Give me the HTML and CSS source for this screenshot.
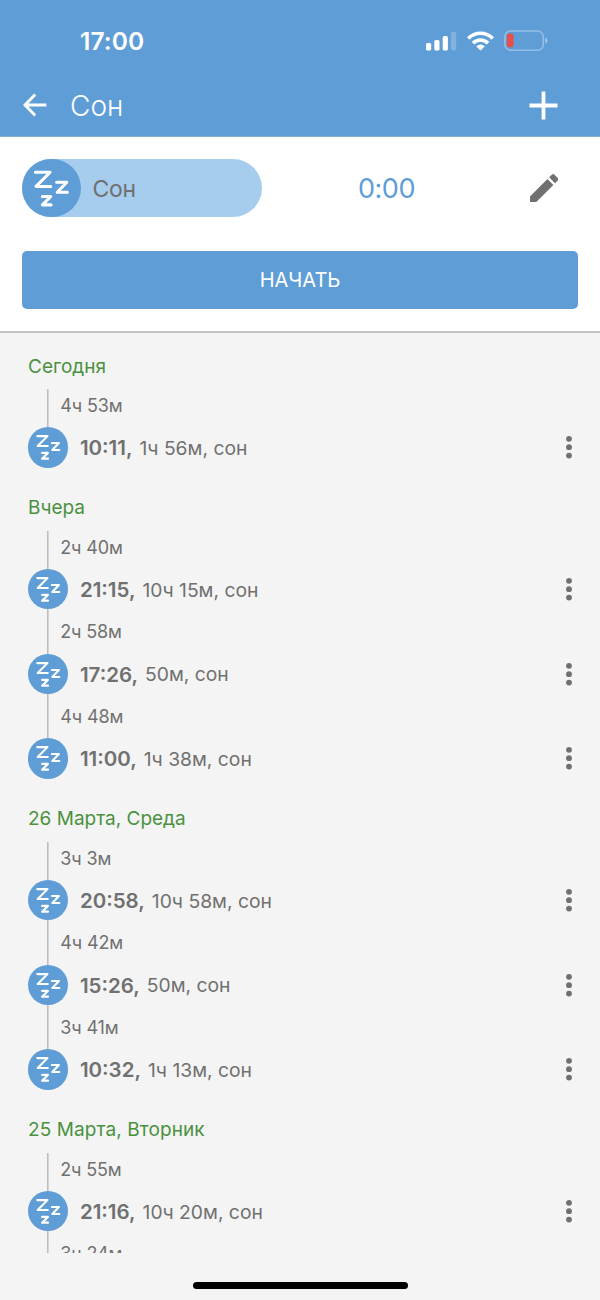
FILE: index.html
```html
<!DOCTYPE html>
<html lang="ru">
<head>
<meta charset="utf-8">
<title>Сон</title>
<link rel="stylesheet" href="styles.css">
</head>
<body>
<svg class="defs" aria-hidden="true">
  <symbol id="zzz" viewBox="0 0 58.5 58.5">
    <g fill="none" stroke="#fff" stroke-linecap="round" stroke-linejoin="round">
      <path stroke-width="3" d="M13.4 13.2H28.2L14 27.4H28.7"/>
      <path stroke-width="3" d="M34.6 23.2H44.8L35.2 33.3H45.4"/>
      <path stroke-width="3.1" d="M20.4 37.5H28.8L20.4 45.9H29"/>
    </g>
  </symbol>
  <symbol id="more" viewBox="0 0 8 24">
    <g fill="#707070"><circle cx="4" cy="3.8" r="2.9"/><circle cx="4" cy="12.2" r="2.9"/><circle cx="4" cy="20.6" r="2.9"/></g>
  </symbol>
</svg>
<div class="app">
  <header class="top">
    <div class="status">
      <span class="clock">17:00</span>
      <svg class="signal" width="31" height="20" viewBox="0 0 31 20" fill="#fff">
        <rect x="0" y="12" width="5.2" height="7.6" rx="1.6"/>
        <rect x="8.3" y="9" width="5.2" height="10.6" rx="1.6"/>
        <rect x="16.7" y="5" width="5.2" height="14.6" rx="1.6"/>
        <rect x="25" y="0.7" width="5.2" height="18.9" rx="1.6" opacity=".22"/>
      </svg>
      <svg class="wifi" width="27" height="20" viewBox="0 0 27 20" fill="none" stroke="#fff" stroke-width="3.6">
        <path d="M1.3 7.4C8 .6 19 .6 25.7 7.4"/>
        <path d="M6 12.1C10.2 8 16.8 8 21 12.1"/>
        <path fill="#fff" stroke="none" d="M9.2 15.3Q13.5 11.7 17.8 15.3L14.2 18.9Q13.5 19.5 12.8 18.9Z"/>
      </svg>
      <svg class="battery" width="44" height="22" viewBox="0 0 44 22">
        <rect x=".9" y="1" width="38.4" height="19.2" rx="5.8" fill="none" stroke="#fff" stroke-opacity=".34" stroke-width="1.6"/>
        <path d="M41.2 7.6Q43.5 8.3 43.5 10.6T41.2 13.6Z" fill="#fff" fill-opacity=".4"/>
        <rect x="3" y="3.6" width="6.6" height="13.6" rx="2.8" fill="#eb4d47"/>
      </svg>
    </div>
    <div class="bar">
      <svg class="back" width="24" height="24" viewBox="0 0 24 24" fill="none" stroke="#fff" stroke-width="2.9"><path d="M23.4 12H2.5M12.2 1.4L2 12L12.2 22.6"/></svg>
      <h1 class="title">Сон</h1>
      <svg class="add" width="29" height="29" viewBox="0 0 29 29" stroke="#fff" stroke-width="3.8"><path d="M14.5 .5V28.5M.5 14.5H28.5"/></svg>
    </div>
  </header>

  <section class="panel">
    <div class="timer">
      <div class="pill"><span class="badge big"><svg><use href="#zzz"/></svg></span><span class="pill-text">Сон</span></div>
      <span class="elapsed">0:00</span>
      <svg class="edit" width="28.4" height="28.4" viewBox="3 3 18 18" fill="#707070"><path d="M3 17.25V21h3.75L17.81 9.94l-3.75-3.75L3 17.25zM20.71 7.04c.39-.39.39-1.02 0-1.41l-2.34-2.34c-.39-.39-1.02-.39-1.41 0l-1.83 1.83 3.75 3.75 1.83-1.83z"/></svg>
    </div>
    <button class="start">НАЧАТЬ</button>
  </section>

  <main class="list">
    <section class="group">
      <h2 class="day">Сегодня</h2>
      <div class="item"><p class="gap">4ч 53м</p><div class="entry"><span class="badge"><svg><use href="#zzz"/></svg></span><b class="time">10:11,</b><span class="info">1ч 56м, сон</span><svg class="more"><use href="#more"/></svg></div></div>
    </section>
    <section class="group">
      <h2 class="day">Вчера</h2>
      <div class="item"><p class="gap">2ч 40м</p><div class="entry"><span class="badge"><svg><use href="#zzz"/></svg></span><b class="time">21:15,</b><span class="info">10ч 15м, сон</span><svg class="more"><use href="#more"/></svg></div></div>
      <div class="item"><p class="gap">2ч 58м</p><div class="entry"><span class="badge"><svg><use href="#zzz"/></svg></span><b class="time">17:26,</b><span class="info">50м, сон</span><svg class="more"><use href="#more"/></svg></div></div>
      <div class="item"><p class="gap">4ч 48м</p><div class="entry"><span class="badge"><svg><use href="#zzz"/></svg></span><b class="time">11:00,</b><span class="info">1ч 38м, сон</span><svg class="more"><use href="#more"/></svg></div></div>
    </section>
    <section class="group">
      <h2 class="day">26 Марта, Среда</h2>
      <div class="item"><p class="gap">3ч 3м</p><div class="entry"><span class="badge"><svg><use href="#zzz"/></svg></span><b class="time">20:58,</b><span class="info">10ч 58м, сон</span><svg class="more"><use href="#more"/></svg></div></div>
      <div class="item"><p class="gap">4ч 42м</p><div class="entry"><span class="badge"><svg><use href="#zzz"/></svg></span><b class="time">15:26,</b><span class="info">50м, сон</span><svg class="more"><use href="#more"/></svg></div></div>
      <div class="item"><p class="gap">3ч 41м</p><div class="entry"><span class="badge"><svg><use href="#zzz"/></svg></span><b class="time">10:32,</b><span class="info">1ч 13м, сон</span><svg class="more"><use href="#more"/></svg></div></div>
    </section>
    <section class="group">
      <h2 class="day wide">25 Марта, Вторник</h2>
      <div class="item"><p class="gap">2ч 55м</p><div class="entry"><span class="badge"><svg><use href="#zzz"/></svg></span><b class="time">21:16,</b><span class="info">10ч 20м, сон</span><svg class="more"><use href="#more"/></svg></div></div>
      <div class="item"><p class="gap">3ч 24м</p></div>
    </section>
  </main>
  <footer class="home"><span class="home-bar"></span></footer>
</div>
</body>
</html>
```
FILE: styles.css
```css
* { box-sizing: border-box; margin: 0; padding: 0; }
body { font-family: Inter, "Noto Sans", sans-serif; background: #f4f4f4; color: #707070; }
svg { display: block; flex: none; }
.defs { width: 0; height: 0; position: absolute; }
.app { width: 600px; height: 1300px; display: flex; flex-direction: column; overflow: hidden; }

.top { height: 137px; flex: none; background: #5f9dd7; border-bottom: 1px solid #85afd6; color: #fff; }
.status { height: 74px; padding: 8px 52px 0 80px; display: flex; align-items: center; }
.clock { font-size: 24.5px; font-weight: 600; letter-spacing: 0.1px; flex: 1; }
.wifi { margin-left: 10px; }
.battery { margin-left: 10px; }
.bar { height: 62px; padding: 0 42px 0 23px; display: flex; align-items: center; }
.title { font-size: 28px; font-weight: 300; margin-left: 23px; padding-top: 2px; flex: 1; }

.panel { height: 196px; flex: none; background: #fff; border-bottom: 2px solid #c4c4c4; padding: 21.5px 22px 0; }
.timer { height: 58.5px; display: flex; align-items: center; }
.pill { width: 240px; height: 58.5px; border-radius: 30px; background: #a6ccee; display: flex; align-items: center; }
.pill-text { font-size: 23px; letter-spacing: -0.3px; margin-left: 12px; padding-top: 2px; }
.elapsed { width: 249px; text-align: center; font-size: 27px; letter-spacing: -0.5px; padding-top: 2px; color: #5f9dd7; }
.edit { margin-left: 19px; }
.badge { width: 40.4px; height: 40.4px; flex: none; border-radius: 50%; background: #5f9dd7; }
.badge svg { width: 100%; height: 100%; }
.badge.big { width: 58.5px; height: 58.5px; }
.start { display: block; width: 556px; height: 58.5px; margin-top: 33.5px; border: 0; border-radius: 5px; background: #5f9dd7; color: #fff; font: 400 20px Inter, sans-serif; }

.list { height: 919.5px; flex: none; overflow: hidden; }
.group + .group { margin-top: 7.05px; }
.day { height: 50px; padding: 9.6px 0 0 28px; font-size: 19px; line-height: 48px; font-weight: 400; color: #4a913f; }
.day.wide { letter-spacing: 0.1px; }
.item { padding: 0 27px 0 28px; }
.gap { height: 44.25px; line-height: 46px; margin-left: 19.3px; padding-left: 13px; font-size: 18px; letter-spacing: -0.15px;
  background: linear-gradient(#bdbdbd, #bdbdbd) 0 0 / 1.6px 100% no-repeat; }
.day + .item .gap { background-position: 0 6px; }
.entry { height: 40.4px; display: flex; align-items: center; }
.time { font-size: 20.5px; font-weight: 600; margin-left: 11.5px; padding-top: 1px; }
.info { font-size: 19.3px; margin-left: 7px; padding-top: 1px; flex: 1; }
.more { width: 8px; height: 24px; }

.home { flex: 1; display: flex; justify-content: center; align-items: flex-start; padding-top: 29px; }
.home-bar { width: 215px; height: 7px; border-radius: 4px; background: #000; }
```
